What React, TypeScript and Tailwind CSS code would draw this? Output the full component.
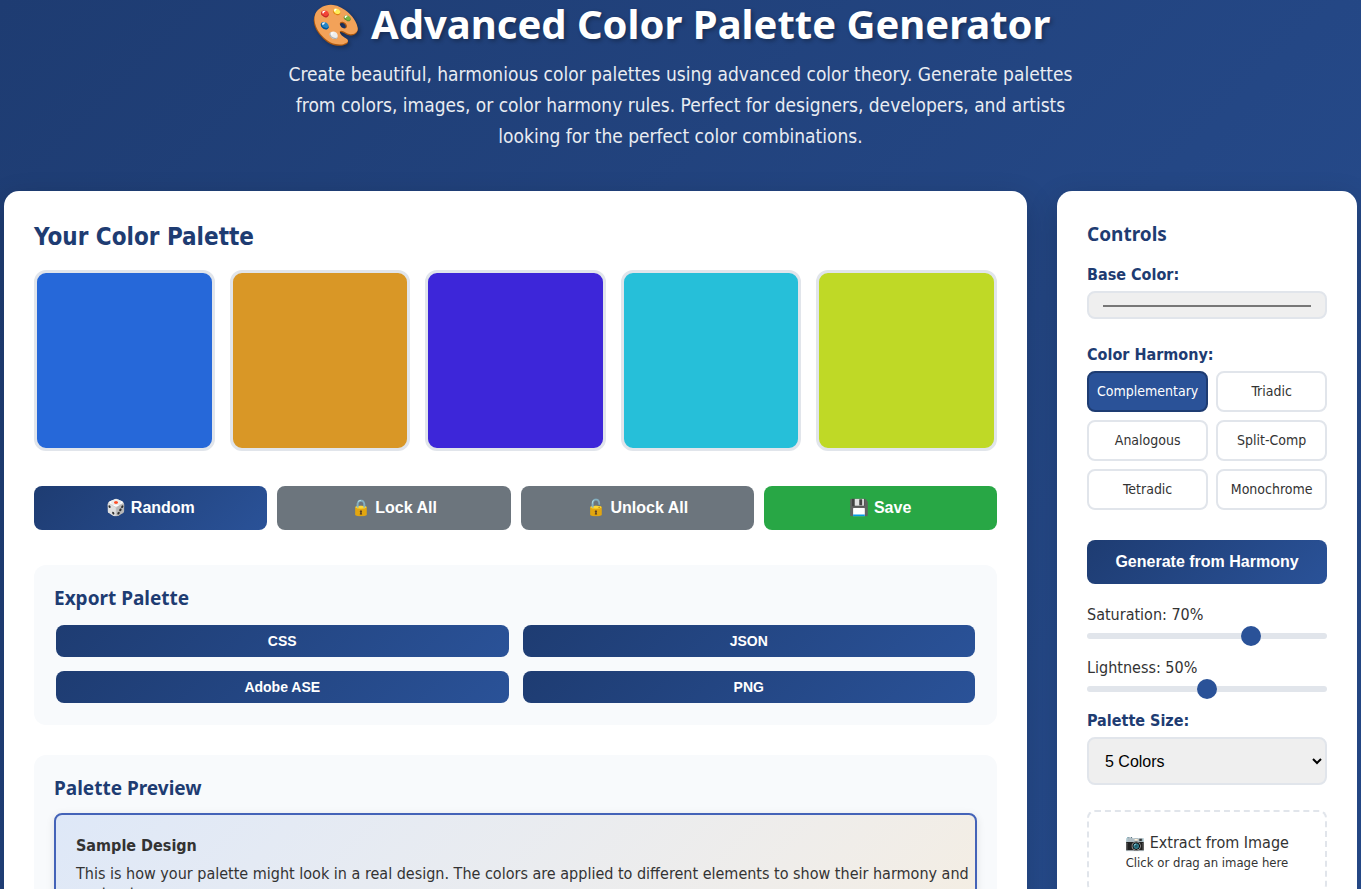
import { useState } from "react";

const palette = ["#2668d9", "#d99726", "#3d26d9", "#26bfd9", "#bfd926"];

const harmonies = [
  "Complementary",
  "Triadic",
  "Analogous",
  "Split-Comp",
  "Tetradic",
  "Monochrome",
];

const exportFormats = ["CSS", "JSON", "Adobe ASE", "PNG"];

const actionClass =
  "h-11 rounded-lg font-['Liberation_Sans',sans-serif] text-base font-bold text-white cursor-pointer";

const headingClass =
  "mb-3 font-['Noto_Sans',sans-serif] text-[19px] leading-[26px] font-bold text-[#1e3c72]";

const labelClass =
  "mb-[5px] block text-base leading-[22px] font-bold text-[#1e3c72]";

const sliderClass =
  "mt-[7px] mb-[18px] block h-1.5 w-full appearance-none rounded-[3px] bg-[#e1e5eb] [&::-webkit-slider-thumb]:h-5 [&::-webkit-slider-thumb]:w-5 [&::-webkit-slider-thumb]:appearance-none [&::-webkit-slider-thumb]:rounded-full [&::-webkit-slider-thumb]:bg-[#2a5298]";

function Slider({
  id,
  label,
  value,
  onChange,
}: {
  id: string;
  label: string;
  value: number;
  onChange: (value: number) => void;
}) {
  return (
    <div>
      <label htmlFor={id} className="block text-base leading-[22px]">
        {label}: {value}%
      </label>
      <input
        id={id}
        type="range"
        min={0}
        max={100}
        value={value}
        onChange={(e) => onChange(Number(e.target.value))}
        className={sliderClass}
      />
    </div>
  );
}

export default function App() {
  const [baseColor, setBaseColor] = useState("#777777");
  const [harmony, setHarmony] = useState("Complementary");
  const [saturation, setSaturation] = useState(70);
  const [lightness, setLightness] = useState(50);
  const [size, setSize] = useState("5");

  return (
    <div className="min-h-screen bg-linear-135 from-[#1e3c72] to-[#2a5298] px-1 pb-80 font-['DejaVu_Sans_Condensed','DejaVu_Sans',sans-serif] text-[#333]">
      <header className="pb-[39px] text-center text-white">
        <h1 className="font-['Noto_Sans',sans-serif] text-[40px] leading-[48px] font-bold text-shadow-[2px_2px_4px_rgba(0,0,0,0.3)]">
          🎨 Advanced Color Palette Generator
        </h1>
        <p className="mx-auto mt-[11px] max-w-[800px] text-[19px] leading-[31px] opacity-90">
          Create beautiful, harmonious color palettes using advanced color
          theory. Generate palettes from colors, images, or color harmony rules.
          Perfect for designers, developers, and artists looking for the perfect
          color combinations.
        </p>
      </header>

      <div className="grid grid-cols-[1fr_300px] gap-[30px]">
        <main className="rounded-[15px] bg-white p-[30px] shadow-[0_10px_30px_rgba(0,0,0,0.2)]">
          <h2 className="mb-[17px] text-2xl leading-8 font-bold text-[#1e3c72]">
            Your Color Palette
          </h2>
          <div className="mb-[35px] grid grid-cols-5 gap-[15px]">
            {palette.map((color) => (
              <button
                key={color}
                type="button"
                aria-label={color}
                className="aspect-square cursor-pointer rounded-xl border-[3px] border-[#e1e5eb]"
                style={{ backgroundColor: color }}
              />
            ))}
          </div>

          <div className="mb-[35px] grid grid-cols-4 gap-[10px]">
            <button
              type="button"
              className={`${actionClass} bg-linear-135 from-[#1e3c72] to-[#2a5298]`}
            >
              🎲 Random
            </button>
            <button type="button" className={`${actionClass} bg-[#6c757d]`}>
              🔒 Lock All
            </button>
            <button type="button" className={`${actionClass} bg-[#6c757d]`}>
              🔓 Unlock All
            </button>
            <button type="button" className={`${actionClass} bg-[#28a745]`}>
              💾 Save
            </button>
          </div>

          <section className="mb-[30px] rounded-xl bg-[#f8fafc] p-5">
            <h3 className={headingClass}>Export Palette</h3>
            <div className="grid grid-cols-2 gap-[14px] p-[2px]">
              {exportFormats.map((format) => (
                <button
                  key={format}
                  type="button"
                  className="h-8 cursor-pointer rounded-lg bg-linear-135 from-[#1e3c72] to-[#2a5298] font-['Liberation_Sans',sans-serif] text-sm font-bold text-white"
                >
                  {format}
                </button>
              ))}
            </div>
          </section>

          <section className="rounded-xl bg-[#f8fafc] p-5">
            <h3 className={headingClass}>Palette Preview</h3>
            <div className="rounded-lg border-2 border-[#4463b8] bg-linear-135 from-[#2668d920] to-[#d9972620] py-5 pr-1 pl-5 shadow-[0_2px_8px_rgba(0,0,0,0.1)]">
              <h4 className="mb-[7px] text-base leading-[22px] font-bold">
                Sample Design
              </h4>
              <p className="text-base leading-5">
                This is how your palette might look in a real design. The colors
                are applied to different elements to show their harmony and
                contrast.
              </p>
            </div>
          </section>
        </main>

        <aside className="rounded-[15px] bg-white px-[30px] pt-[30px] pb-[30px] shadow-[0_10px_30px_rgba(0,0,0,0.2)]">
          <h3 className={headingClass}>Controls</h3>

          <label htmlFor="baseColor" className={`${labelClass} mt-[17px]`}>
            Base Color:
          </label>
          <input
            id="baseColor"
            type="color"
            value={baseColor}
            onChange={(e) => setBaseColor(e.target.value)}
            className="mb-[25px] block h-7 w-full rounded-lg border-2 border-[#e1e5eb] bg-[#efefef] p-3"
          />

          <div className={labelClass}>Color Harmony:</div>
          <div className="mb-[30px] grid grid-cols-[1fr_1fr] gap-2">
            {harmonies.map((name) => (
              <button
                key={name}
                type="button"
                onClick={() => setHarmony(name)}
                className={`cursor-pointer rounded-lg border-2 px-2 py-[10px] text-sm leading-[17px] ${
                  harmony === name
                    ? "border-[#1e3c72] bg-[#2a5298] text-white"
                    : "border-[#e1e5eb] bg-white"
                }`}
              >
                {name}
              </button>
            ))}
          </div>

          <button
            type="button"
            className={`${actionClass} mb-5 w-full bg-linear-135 from-[#1e3c72] to-[#2a5298]`}
          >
            Generate from Harmony
          </button>

          <Slider
            id="saturation"
            label="Saturation"
            value={saturation}
            onChange={setSaturation}
          />
          <Slider
            id="lightness"
            label="Lightness"
            value={lightness}
            onChange={setLightness}
          />

          <label htmlFor="size" className={labelClass}>
            Palette Size:
          </label>
          <select
            id="size"
            value={size}
            onChange={(e) => setSize(e.target.value)}
            className="mb-[25px] block h-12 w-full rounded-lg border-2 border-[#e1e5eb] bg-[#efefef] px-3 font-['Liberation_Sans',sans-serif] text-base text-black"
          >
            <option value="3">3 Colors</option>
            <option value="5">5 Colors</option>
            <option value="7">7 Colors</option>
          </select>

          <button
            type="button"
            className="block w-full cursor-pointer rounded-lg border-2 border-dashed border-[#e1e5eb] p-5 text-center"
          >
            <span className="block text-base leading-[22px]">
              📷 Extract from Image
            </span>
            <span className="block text-[13px] leading-[17px]">
              Click or drag an image here
            </span>
          </button>
        </aside>
      </div>
    </div>
  );
}
